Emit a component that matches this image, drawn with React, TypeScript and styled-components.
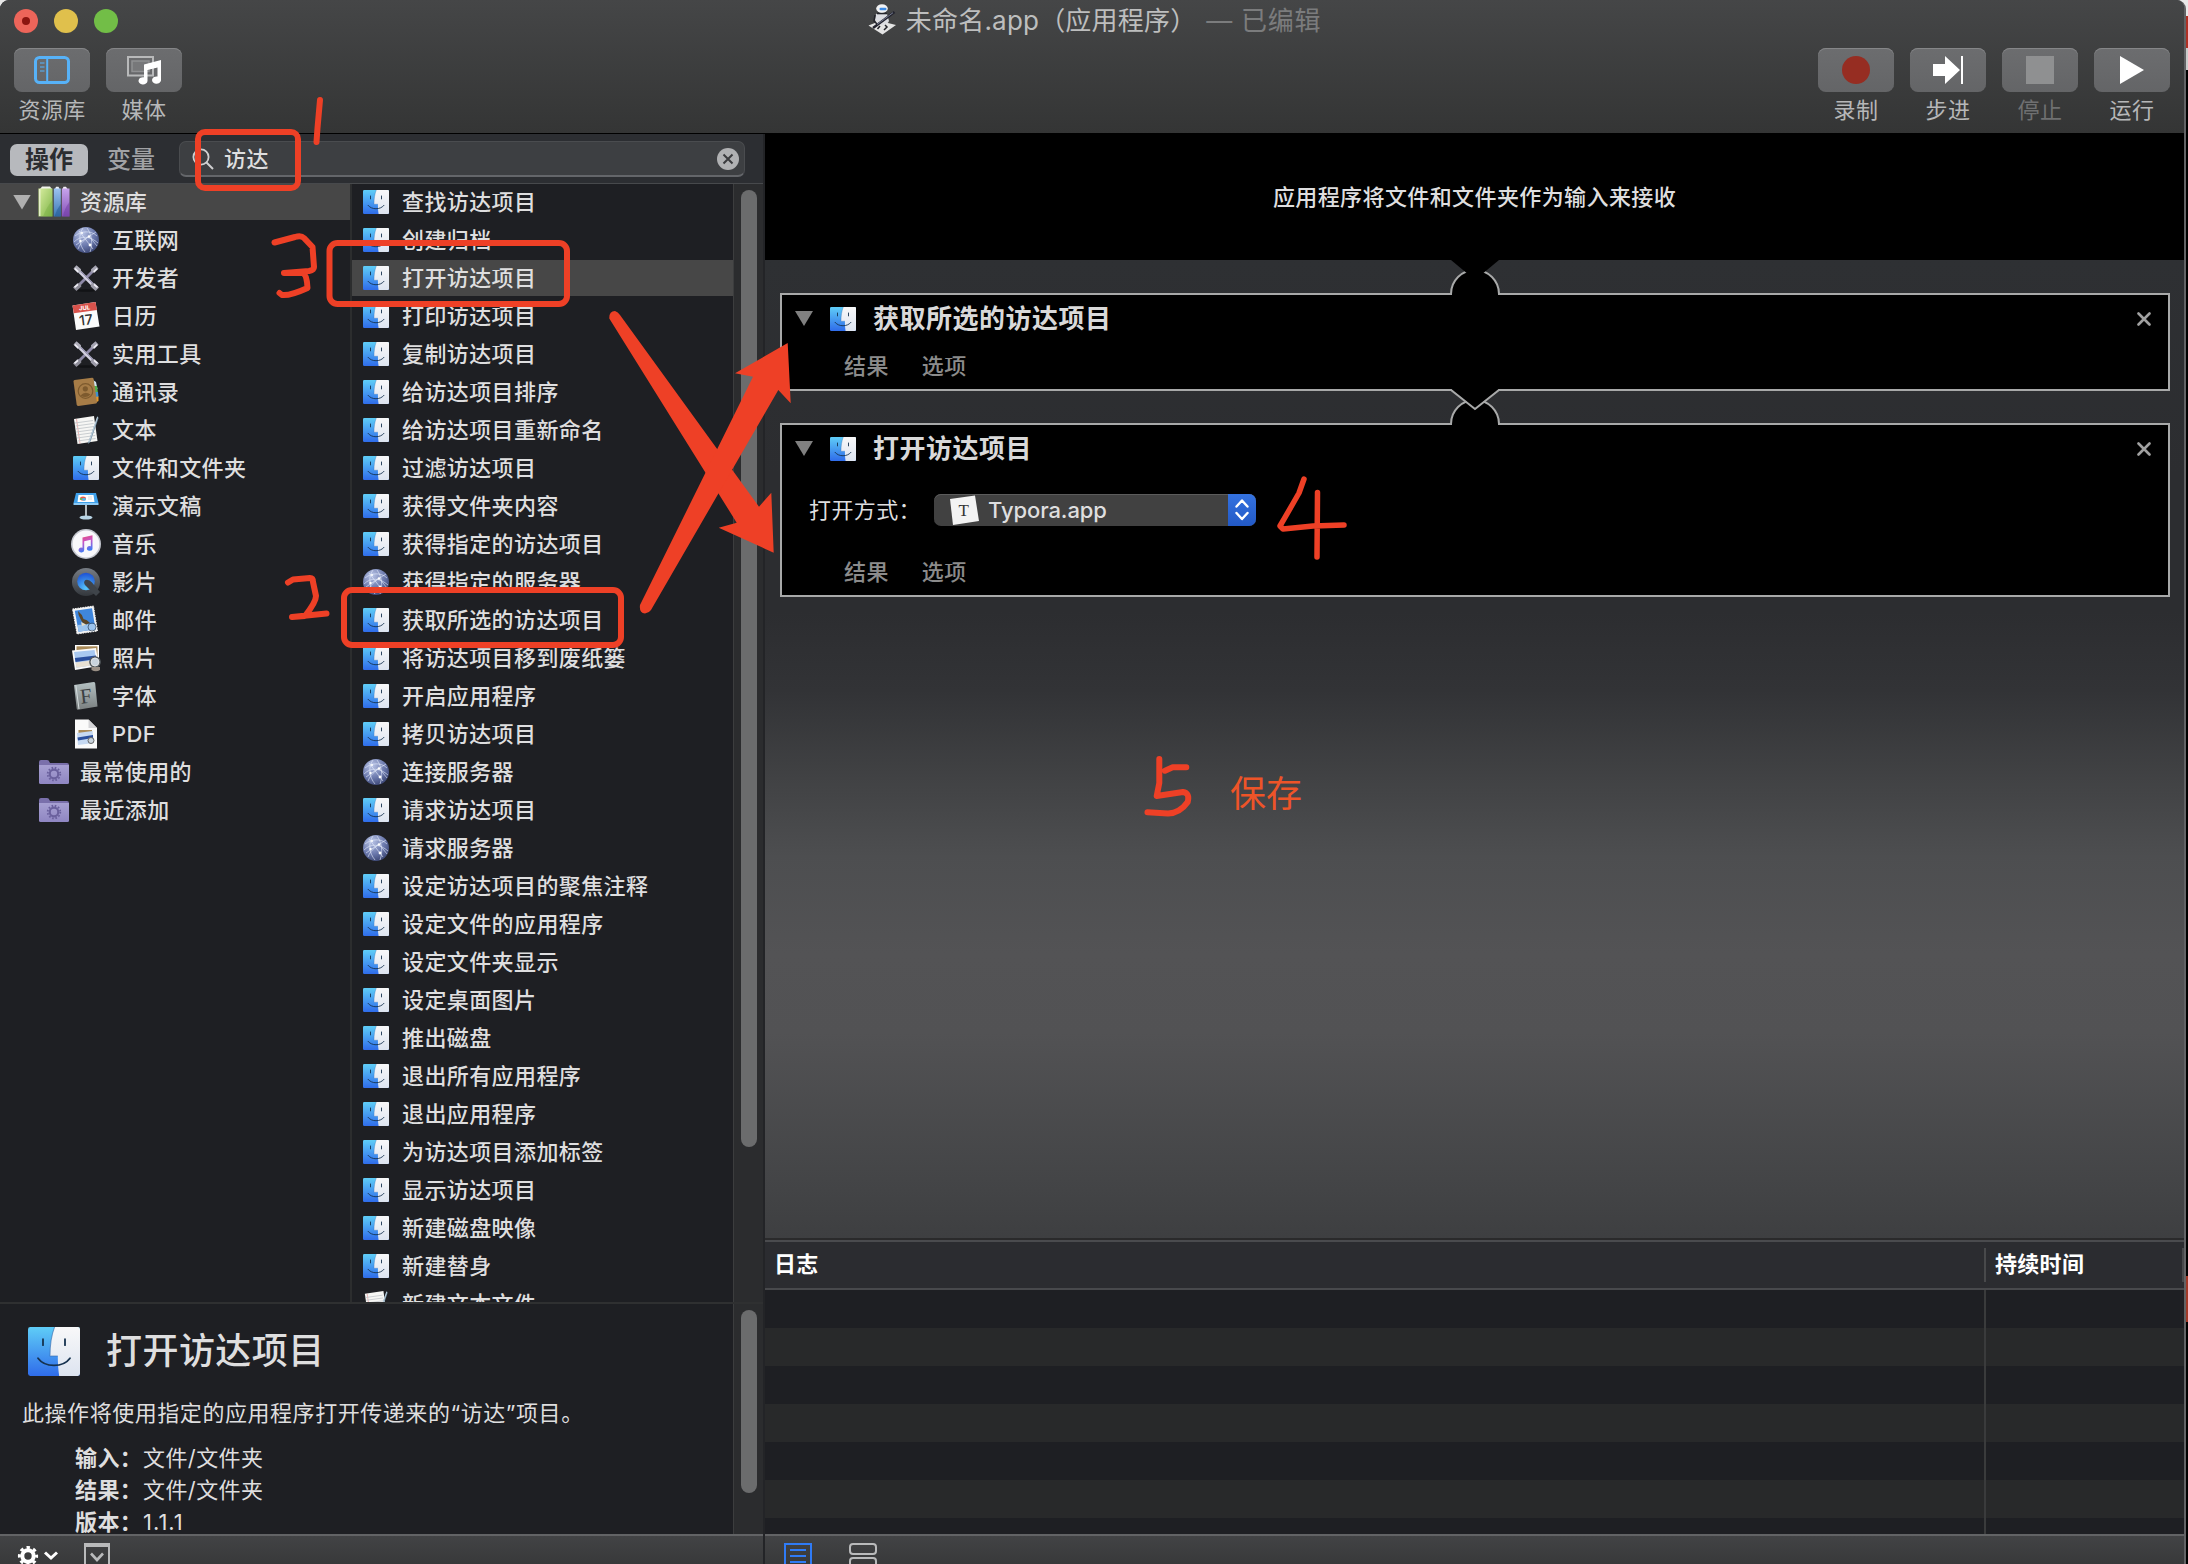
import React from 'react';
import styled, { createGlobalStyle } from 'styled-components';

const RED = '#ee4026';

const GlobalStyle = createGlobalStyle`
  * { box-sizing: border-box; }
  body {
    margin: 0;
    background: #000;
    overflow: hidden;
    font-family: Inter, "Noto Sans CJK SC", sans-serif;
    font-size: 22px;
    letter-spacing: 0.4px;
    color: #dededf;
  }
`;

/* ---------- shell ---------- */

const Desktop = styled.div`
  position: relative;
  display: flex;
  width: 2188px;
  height: 1564px;
  overflow: hidden;
  background: linear-gradient(#e8e8e8 0 16px, #b03024 16px 48px, #ccc 48px 70px, #000 70px 1276px, #a23a28 1276px 1322px, #000 1322px);
`;

const Window = styled.div`
  display: flex;
  flex-direction: column;
  width: 2186px;
  height: 1564px;
  border-right: 2px solid #626365;
  border-radius: 9px 9px 0 0;
  overflow: hidden;
  background: #2b2c30;
`;

const Chrome = styled.header`
  display: flex;
  flex-direction: column;
  height: 134px;
  flex: none;
  background: linear-gradient(#454647, #343535);
  border-bottom: 1px solid #000;
`;

const TitleBar = styled.div`
  display: grid;
  grid-template-columns: 1fr auto 1fr;
  align-items: center;
  height: 41px;
  padding-left: 14px;
`;

const Lights = styled.div`
  display: flex;
  gap: 16px;
`;

const Light = styled.span<{ $color: string; $dot?: boolean }>`
  display: grid;
  place-items: center;
  width: 24px;
  height: 24px;
  border-radius: 50%;
  background: ${(p) => p.$color};
  &::after {
    content: '';
    width: 8px;
    height: 8px;
    border-radius: 50%;
    background: ${(p) => (p.$dot ? '#8c1510' : 'transparent')};
  }
`;

const Title = styled.div`
  display: flex;
  align-items: center;
  height: 41px;
  line-height: 41px;
  margin-left: -9px;
  font-size: 26px;
  letter-spacing: 0.2px;
  color: #bdbebe;
  white-space: pre;
  svg { margin-right: 9px; margin-top: -2px; }
`;

const Edited = styled.span`
  margin-left: 10px;
  letter-spacing: 0.7px;
  color: #7b7c7d;
`;

const Toolbar = styled.div`
  display: flex;
  gap: 16px;
  padding: 7px 14px 0;
`;

const ToolItem = styled.div<{ $dim?: boolean; $push?: boolean }>`
  display: flex;
  flex-direction: column;
  align-items: center;
  width: 76px;
  margin-left: ${(p) => (p.$push ? 'auto' : '0')};
  color: ${(p) => (p.$dim ? '#6f7071' : '#b6b7b8')};
`;

const ToolButton = styled.div`
  display: grid;
  place-items: center;
  width: 76px;
  height: 44px;
  border-radius: 8px;
  background: linear-gradient(#6c6d6f, #646567);
  box-shadow: inset 0 1px 0 #858688;
`;

const ToolLabel = styled.span`
  height: 36px;
  line-height: 36px;
`;

const Body = styled.div`
  display: flex;
  flex: 1;
  min-height: 0;
`;

/* ---------- left side ---------- */

const Side = styled.aside`
  display: flex;
  flex-direction: column;
  width: 765px;
  flex: none;
  border-right: 2px solid #232427;
`;

const FilterBar = styled.div`
  display: flex;
  align-items: center;
  height: 50px;
  flex: none;
  padding: 0 18px 0 10px;
  background: #2c2e32;
  border-bottom: 1px solid #47494c;
`;

const Tab = styled.span<{ $active?: boolean }>`
  display: grid;
  place-items: center;
  width: 78px;
  height: 32px;
  margin-top: 2px;
  margin-right: 4px;
  border-radius: 7px;
  font-size: 24px;
  font-weight: ${(p) => (p.$active ? 700 : 500)};
  letter-spacing: 0;
  line-height: 32px;
  background: ${(p) => (p.$active ? '#b7b9bd' : 'transparent')};
  color: ${(p) => (p.$active ? '#2b2d31' : '#a1a2a5')};
`;

const Search = styled.div`
  display: flex;
  align-items: center;
  flex: 1;
  height: 36px;
  margin: 1px 0 0 5px;
  padding: 1px 5px 0 12px;
  border: 1px solid #4a4c4f;
  border-bottom: 2px solid #64666a;
  border-radius: 7px;
  background: #3d3f42;
`;

const SearchText = styled.span`
  flex: 1;
  margin-left: 10px;
  font-weight: 500;
  line-height: 32px;
`;

const Browser = styled.div`
  display: flex;
  height: 1118px;
  flex: none;
  background: #1e1f23;
  overflow: hidden;
`;

const LibraryList = styled.div`
  display: flex;
  flex-direction: column;
  gap: 2px;
  width: 352px;
  border-right: 2px solid #2c2d2e;
`;

const ActionList = styled.div`
  display: flex;
  flex-direction: column;
  gap: 2px;
  width: 381px;
`;

const Row = styled.div<{ $selected?: boolean; $indent: number; $icon: number; $gap: number }>`
  display: flex;
  align-items: center;
  height: 36px;
  flex: none;
  padding-left: ${(p) => p.$indent}px;
  background: ${(p) => (p.$selected ? '#474747' : 'transparent')};
  font-weight: 500;
  line-height: 36px;
  white-space: nowrap;
  > svg { width: ${(p) => p.$icon}px; flex: none; margin-right: ${(p) => p.$gap}px; }
`;

const Twisty = styled.i<{ $muted?: boolean; $after?: number }>`
  width: 18px;
  height: 15px;
  flex: none;
  margin-right: ${(p) => p.$after ?? 0}px;
  background: ${(p) => (p.$muted ? '#808080' : '#b0b0b0')};
  clip-path: polygon(0 0, 100% 0, 50% 100%);
`;

const Track = styled.div<{ $top: number; $thumb: number }>`
  width: 30px;
  flex: none;
  padding: ${(p) => p.$top}px 0 0 7px;
  border-left: 1px solid #3c3d3e;
  background: #2b2c2e;
  &::before {
    content: '';
    display: block;
    width: 16px;
    height: ${(p) => p.$thumb}px;
    border-radius: 8px;
    background: #6b6c6d;
  }
`;

const Info = styled.section`
  display: flex;
  height: 232px;
  flex: none;
  border-top: 2px solid #2f3031;
  background: #1e1f23;
  overflow: hidden;
`;

const InfoText = styled.div`
  flex: 1;
  padding: 22px 0 0 22px;
  height: 230px;
  overflow: hidden;
`;

const InfoHead = styled.div`
  display: flex;
  align-items: center;
  gap: 26px;
  height: 50px;
  padding-left: 6px;
  font-size: 36px;
  font-weight: 500;
  line-height: 50px;
  letter-spacing: 0.45px;
`;

const InfoDesc = styled.p`
  margin: 21px 0 13px;
  height: 32px;
  line-height: 32px;
  letter-spacing: 0.55px;
`;

const InfoLine = styled.div<{ $spacing?: number }>`
  display: flex;
  height: 32px;
  padding-left: 53px;
  line-height: 32px;
  letter-spacing: ${(p) => p.$spacing ?? 0.4}px;
  b { width: 68px; font-weight: 700; letter-spacing: 0.4px; }
`;

const Footer = styled.div<{ $left: number; $gap: number }>`
  display: flex;
  align-items: flex-start;
  gap: ${(p) => p.$gap}px;
  height: 30px;
  flex: none;
  padding: 7px 0 0 ${(p) => p.$left}px;
  border-top: 2px solid #626365;
  background: linear-gradient(#424345, #38393a);
  overflow: hidden;
`;

/* ---------- workflow ---------- */

const Main = styled.main`
  display: flex;
  flex-direction: column;
  flex: 1;
  min-width: 0;
`;

const InputHeader = styled.div`
  height: 126px;
  flex: none;
  background: #000;
  font-weight: 500;
  line-height: 126px;
  text-align: center;
`;

const Canvas = styled.div`
  position: relative;
  display: flex;
  flex-direction: column;
  gap: 32px;
  height: 978px;
  flex: none;
  padding: 33px 14px 0 15px;
  background: linear-gradient(#2e3033 0, #2c2d30 22%, #2c2d30 36%, #323336 44%, #414244 53%, #4d4e50 61%, #535355 71%, #525254 79%, #444547 94%, #3e3f41 100%);
`;

const HeaderNotch = styled.svg`
  position: absolute;
  top: 0;
  left: 686px;
  z-index: 1;
`;

const Card = styled.section<{ $height: number }>`
  position: relative;
  display: flex;
  flex-direction: column;
  justify-content: space-between;
  height: ${(p) => p.$height}px;
  flex: none;
  border: 2px solid #a8a9a9;
  background: #000;
`;

const Bump = styled.svg`
  position: absolute;
  left: 668px;
  top: -26px;
`;

const Vee = styled.svg`
  position: absolute;
  left: 668px;
  bottom: -22px;
  z-index: 2;
`;

const CardHead = styled.div`
  display: flex;
  align-items: center;
  height: 47px;
  padding: 0 17px 0 13px;
  font-size: 26px;
  font-weight: 700;
  line-height: 47px;
  letter-spacing: 0.5px;
  color: #d9d9d9;
  > svg { width: 26px; margin: 0 17px; }
  > svg:last-child { width: 14px; margin: 0 0 0 auto; }
`;

const CardField = styled.div`
  display: flex;
  align-items: center;
  height: 40px;
  padding-left: 27px;
  margin-top: -2px;
  font-weight: 400;
  line-height: 40px;
`;

const Select = styled.div`
  display: flex;
  align-items: center;
  width: 322px;
  height: 32px;
  margin-left: 13px;
  padding-left: 14px;
  border-radius: 7px;
  background: #414141;
  box-shadow: inset 0 1px 0 #5c5c5c;
  overflow: hidden;
  font-weight: 500;
  line-height: 32px;
  letter-spacing: -0.1px;
  > svg { margin-right: 8px; }
`;

const Stepper = styled.span`
  display: grid;
  place-items: center;
  width: 28px;
  height: 32px;
  margin-left: auto;
  background: linear-gradient(#3472e0, #2259c6);
`;

const CardTabs = styled.div`
  display: flex;
  gap: 33px;
  height: 46px;
  padding-left: 62px;
  line-height: 46px;
  font-weight: 500;
  color: #8b8b8b;
`;

/* ---------- log ---------- */

const LogHead = styled.div`
  display: flex;
  align-items: center;
  height: 52px;
  flex: none;
  border-top: 2px solid #2a2a2b;
  border-bottom: 2px solid #48494c;
  box-shadow: inset 0 2px 0 #4a4b4e;
  background: #2b2c30;
  font-weight: 700;
  letter-spacing: 0.3px;
  color: #fff;
`;

const LogCell = styled.span<{ $width: number }>`
  width: ${(p) => p.$width}px;
  flex: none;
  height: 34px;
  margin-top: 2px;
  padding-left: 9px;
  line-height: 33px;
  border-right: 2px solid #48494b;
`;

const LogBody = styled.div`
  display: flex;
  flex-direction: column;
  height: 244px;
  flex: none;
  overflow: hidden;
`;

const LogRow = styled.div`
  display: flex;
  height: 38px;
  flex: none;
  background: #1e1f23;
  &:nth-child(even) { background: #28292a; }
  &::before {
    content: '';
    width: 1219px;
    border-right: 2px solid #3a3b3c;
  }
`;

/* ---------- annotations ---------- */

const Marks = styled.svg`
  position: absolute;
  inset: 0;
  z-index: 5;
`;

const SaveNote = styled.span`
  position: absolute;
  left: 1230px;
  top: 769px;
  z-index: 5;
  font-size: 36px;
  line-height: 50px;
  letter-spacing: 0;
  color: #ee5428;
`;

/* ---------- icons ---------- */

const HiddenDefs = styled.svg`
  position: absolute;
  width: 0;
  height: 0;
`;

const Defs = () => (
  <HiddenDefs>
    <defs>
      <linearGradient id="fBlue" x1="0" y1="0" x2="0" y2="1"><stop offset="0" stopColor="#5fcdf7" /><stop offset="1" stopColor="#2f6cea" /></linearGradient>
      <linearGradient id="fWhite" x1="0" y1="0" x2="0" y2="1"><stop offset="0" stopColor="#f8f8f9" /><stop offset="1" stopColor="#dde4f0" /></linearGradient>
      <radialGradient id="globe" cx="0.35" cy="0.25" r="0.8"><stop offset="0" stopColor="#b9c4e6" /><stop offset="0.6" stopColor="#6b79ad" /><stop offset="1" stopColor="#3b4674" /></radialGradient>
      <linearGradient id="green" x1="0" y1="0" x2="1" y2="1"><stop offset="0" stopColor="#d8eda0" /><stop offset="1" stopColor="#7fb548" /></linearGradient>
      <linearGradient id="blueB" x1="0" y1="0" x2="0" y2="1"><stop offset="0" stopColor="#9cc3f0" /><stop offset="1" stopColor="#3c78b4" /></linearGradient>
      <linearGradient id="purp" x1="0" y1="0" x2="0" y2="1"><stop offset="0" stopColor="#c7a4ec" /><stop offset="1" stopColor="#8652b8" /></linearGradient>
      <linearGradient id="note" x1="0" y1="0" x2="0.3" y2="1"><stop offset="0" stopColor="#f0476a" /><stop offset="0.5" stopColor="#c455c9" /><stop offset="1" stopColor="#3f7df5" /></linearGradient>
      <linearGradient id="qt" x1="0" y1="0" x2="0" y2="1"><stop offset="0" stopColor="#777d85" /><stop offset="1" stopColor="#33373c" /></linearGradient>
      <radialGradient id="qtb" cx="0.5" cy="0.9" r="0.9"><stop offset="0" stopColor="#59c8fa" /><stop offset="1" stopColor="#1b4fd4" /></radialGradient>
      <linearGradient id="fontB" x1="0" y1="0" x2="0" y2="1"><stop offset="0" stopColor="#b4c0c2" /><stop offset="1" stopColor="#7a7f80" /></linearGradient>
      <linearGradient id="fold" x1="0" y1="0" x2="0" y2="1"><stop offset="0" stopColor="#a7a0d2" /><stop offset="1" stopColor="#8f86c2" /></linearGradient>
    </defs>
  </HiddenDefs>
);

const Finder = ({ w = 26, h = 24 }: { w?: number; h?: number }) => (
  <svg width={w} height={h} viewBox="0 0 26 24" preserveAspectRatio="none">
    <rect width="26" height="24" rx="1.2" fill="url(#fBlue)" />
    <path d="M13.3 0H24.8A1.2 1.2 0 0 1 26 1.2V22.8A1.2 1.2 0 0 1 24.8 24H15.6C15.2 21.500 14.900 18 14.900 14.200H11C11 9 11.700 4 13.300 0Z" fill="url(#fWhite)" />
    <path d="M14.9 14.2H11C11 9 11.7 4 13.3 0" fill="none" stroke="#3568a8" strokeWidth="0.5" opacity="0.6" />
    <path d="M7.500 6V8.900M18.500 6V8.900" stroke="#16324f" strokeWidth="0.9" strokeLinecap="round" />
    <path d="M5 15.300C8.500 20 17.500 20 21 15.300" fill="none" stroke="#16324f" strokeWidth="0.9" strokeLinecap="round" />
  </svg>
);

const Globe = () => (
  <svg width="26" height="26" viewBox="0 0 26 26">
    <circle cx="13" cy="13" r="13" fill="url(#globe)" />
    <g fill="none" stroke="#e6ecfb" strokeWidth="0.8" opacity="0.75">
      <path d="M2 9C8 4 18 3 24 9M1 15C8 8 17 9 25 16M5 22C8 14 15 10 23 5M10 1C5 8 6 18 12 25M14 1C19 8 20 17 17 25M6 4L20 22M3 18L16 9L24 19" />
    </g>
    <g fill="#fff"><circle cx="16" cy="9.500" r="1.300" /><circle cx="7.500" cy="14" r="1.200" /><circle cx="17" cy="18" r="1.400" /><circle cx="9" cy="6" r="1" /></g>
  </svg>
);

const Tools = () => (
  <svg width="28" height="28" viewBox="0 0 28 28">
    <ellipse cx="14" cy="26.500" rx="10" ry="1.300" fill="#121316" />
    <path d="M23 5L5 23" stroke="#8e89a8" strokeWidth="2.800" />
    <path d="M5 5L23 23" stroke="#d2d0e0" strokeWidth="3.200" />
    <path d="M5.700 4.300L23.700 22.300" stroke="#6c6690" strokeWidth="0.900" />
    <path d="M1.500 4.500L4.500 1.200L9 5.200L8.600 8.400L5.600 8.700Z" fill="#aeadb9" />
    <path d="M26.500 4.500L23.500 1.200L19 5.200L19.400 8.400L22.400 8.700Z" fill="#a5a4b2" />
    <path d="M1 23.500L4.500 27L9.300 22.500L8.900 19.400L5.500 19Z" fill="#8d8c98" />
    <path d="M27 23.500L23.500 27L18.700 22.500L19.100 19.400L22.500 19Z" fill="#9c9ba8" />
    <path d="M2.800 4.600L6.300 7.800M25.200 4.600L21.700 7.800M2.500 23.300L6 20.300M25.500 23.300L22 20.300" stroke="#f0eff6" strokeWidth="1.700" />
  </svg>
);

const Calendar = () => (
  <svg width="28" height="30" viewBox="0 0 28 30">
    <path d="M0.500 4.500L23.500 1L27.500 25.500L4 29Z" fill="#fbfbfb" />
    <path d="M0.500 4.500L23.500 1L25 9L1.800 12.200Z" fill="#d9534c" />
    <text x="7" y="9" fontSize="6" fontWeight="700" fill="#fff" letterSpacing="0" transform="rotate(-7 12 7)">JUL</text>
    <text x="7" y="24" fontSize="14" fill="#333" letterSpacing="0" transform="rotate(-7 14 19)">17</text>
  </svg>
);

const Contacts = () => (
  <svg width="28" height="30" viewBox="0 0 28 30">
    <path d="M21 3L24 5L25.500 12H22Z" fill="#cfe3ee" /><path d="M22 9H25L26 16H23Z" fill="#52b04c" /><path d="M23 15H26L26.500 20H23Z" fill="#3d8fd0" /><path d="M23 20L26.500 19.500V24L23 26Z" fill="#e39a2d" />
    <path d="M1.500 4.500Q1.400 3.300 2.600 3L20 0.800Q21.300 0.700 21.600 2L25 25Q25 26.200 24 26.400L6.500 29Q5 29 4.700 27.800Z" fill="#a67c47" />
    <circle cx="13.500" cy="14" r="7.300" fill="none" stroke="#7d5a2e" strokeWidth="1.200" />
    <circle cx="13.300" cy="11.800" r="2.600" fill="#7d5a2e" /><path d="M8.500 18.500Q13 13.500 18.500 17.500Q14 22 8.500 18.500Z" fill="#7d5a2e" />
  </svg>
);

const TextDoc = () => (
  <svg width="28" height="30" viewBox="0 0 28 30">
    <path d="M2 4L22 1L25.500 26L5.500 29Z" fill="#f6f6f4" />
    <path d="M4.500 4L8 28.500" stroke="#e8a0a0" strokeWidth="0.800" />
    <path d="M3 8L21 5.500M3.400 11L21.500 8.500M3.800 14L22 11.500M4.200 17L22.400 14.500M4.600 20L22.800 17.500M5 23L23.200 20.500M5.400 26L23.600 23.500" stroke="#c4c8cc" strokeWidth="0.900" />
    <path d="M25.500 1L16.500 26.500L15.800 29L18.300 27L26.500 3Z" fill="#7d99ae" />
    <path d="M25.500 2L17 27" stroke="#c7d7e2" strokeWidth="0.900" />
  </svg>
);

const Keynote = () => (
  <svg width="28" height="28" viewBox="0 0 28 28">
    <path d="M14 11V25" stroke="#c4ccd2" strokeWidth="1.800" />
    <ellipse cx="14" cy="25.500" rx="6.500" ry="2" fill="#b8d4e6" />
    <path d="M4 1H24L26.500 11H1.500Z" fill="#3fa0ea" /><path d="M1.500 11H26.500V13H1.500Z" fill="#8ccaf5" />
    <path d="M6.500 3H21.500L22.500 10H5.500Z" fill="#fff" />
    <ellipse cx="11" cy="6.400" rx="3" ry="2" fill="#e95a4e" /><ellipse cx="12" cy="7.400" rx="2" ry="1.300" fill="#52b8e8" /><ellipse cx="9" cy="7" rx="1.300" ry="1" fill="#6bbf5b" />
    <path d="M16 5H20M16 7H20" stroke="#ccc" strokeWidth="0.700" />
  </svg>
);

const Music = () => (
  <svg width="30" height="30" viewBox="0 0 30 30">
    <circle cx="15" cy="15" r="15" fill="#c3c6ce" /><circle cx="15" cy="15" r="13.400" fill="#f8f8fb" />
    <path d="M11.500 8.500L21.500 6.300V19.300A2.800 2.400 0 1 1 19.800 17.200V10.800L13.200 12.200V21A2.800 2.400 0 1 1 11.500 18.800Z" fill="url(#note)" />
  </svg>
);

const QuickTime = () => (
  <svg width="30" height="30" viewBox="0 0 30 30">
    <circle cx="15" cy="15" r="14" fill="url(#qt)" />
    <circle cx="15" cy="14.500" r="8.800" fill="url(#qtb)" />
    <path d="M14.500 13Q18 12 21 15.500L29 25L25 29L14 18Q12 15 14.500 13Z" fill="#3f444a" />
  </svg>
);

const Mail = () => (
  <svg width="28" height="30" viewBox="0 0 28 30">
    <path d="M0.500 4L21.500 1L25.500 26L5 29Z" fill="#f3f3f3" stroke="#f3f3f3" strokeWidth="1" strokeDasharray="1.500 1" />
    <path d="M2.800 5.800L20 3.300L23.500 24.300L6.600 26.800Z" fill="#3f86dc" /><path d="M5.500 20L22.700 18.500L23.500 24.300L6.600 26.800Z" fill="#9cc4ee" />
    <path d="M6 6Q10 9 11.500 14Q15 14.500 18 18L14 19.500Q10 18 8.500 14Q6 10 6 6Z" fill="#5a4528" />
    <path d="M9 17L14 19.500L10 21Z" fill="#e9dcc0" />
    <circle cx="20" cy="22" r="4" fill="none" stroke="#35506e" strokeWidth="0.800" />
  </svg>
);

const Photos = () => (
  <svg width="30" height="28" viewBox="0 0 30 28">
    <path d="M4 1H28V20H4Z" fill="#fff" /><path d="M5.500 2.300H26.500V18H5.500Z" fill="#a98a58" />
    <path d="M1 6.500L25 4L28 22L4 26Z" fill="#fafafa" /><path d="M3 8L23.500 6L26 20.500L5.500 23.800Z" fill="#a9c9f1" />
    <path d="M3.800 14L25 11.500L25.600 15L4.500 18Z" fill="#2a4f9e" /><path d="M4.600 18.500L25.600 15.800L26 20.500L5.500 23.800Z" fill="#e9e1d3" />
    <circle cx="24" cy="18" r="5" fill="#c9d3dc" stroke="#555b5f" strokeWidth="1.700" /><circle cx="24" cy="18" r="4" fill="none" stroke="#e6e6e6" strokeWidth="0.800" />
    <path d="M20.500 23H29V26Q25 28.500 20.500 26Z" fill="#9a8f85" />
  </svg>
);

const FontBook = () => (
  <svg width="28" height="30" viewBox="0 0 28 30">
    <path d="M2 4L21.500 1Q23 1 23.200 2.300L25.500 25.500L6 28.800Q5 29 4.700 27.800Z" fill="url(#fontB)" />
    <path d="M3.800 4L7 28" stroke="#d5dcde" strokeWidth="1" />
    <text x="8" y="22" fontFamily="Liberation Serif" fontSize="21" fill="#3b4042" letterSpacing="0" transform="rotate(-7 14 15)">F</text>
  </svg>
);

const PdfDoc = () => (
  <svg width="24" height="30" viewBox="0 0 24 30">
    <path d="M1 0.500H14.500L23 9V29.500H1Z" fill="#fafafa" /><path d="M14.500 0.500V9H23Z" fill="#d5d5d8" />
    <path d="M4.500 11L18 11V23H4.500Z" fill="#a98a58" /><path d="M3 14L18.500 12L20 24L4 26Z" fill="#c6d9f2" /><path d="M3.500 18.500L19 16V19L4 21.500Z" fill="#2a4f9e" />
    <circle cx="17" cy="21.500" r="3" fill="#c9d3dc" stroke="#666" strokeWidth="1" />
  </svg>
);

const Library = () => (
  <svg width="32" height="32" viewBox="0 0 32 32">
    <path d="M2 3L4 0.500H12L14 3Z" fill="#f1f3ec" /><path d="M17 3L18 0.800H20.500L21.500 3Z" fill="#eef2f8" /><path d="M24.500 3L25.500 0.800H28L29.500 3Z" fill="#f3eef8" />
    <path d="M0.500 2.500H14.500V30.500H0.500Z" fill="url(#green)" /><path d="M1.800 3V30" stroke="#f0f6dc" strokeWidth="1.200" />
    <path d="M15.800 2.500H22.800V30.500H15.800Z" fill="url(#blueB)" /><path d="M23.800 2.500H31.500V30.500H23.800Z" fill="url(#purp)" />
    <path d="M14.500 14Q8 22 5 30.500H14.500Z" fill="#6fa53c" opacity="0.350" /><path d="M22.800 18Q18 24 16.500 30.500H22.800Z" fill="#1f5690" opacity="0.500" /><path d="M31.500 16Q26 23 25 30.500H31.500Z" fill="#6a35a0" opacity="0.450" />
  </svg>
);

const SmartFolder = () => (
  <svg width="30" height="24" viewBox="0 0 30 24">
    <path d="M0 2Q0 0 2 0H8Q10 0 10.500 2L11 3H28Q30 3 30 5V8H0Z" fill="#7a70ab" />
    <path d="M0 5H30V22.500Q30 24 28.500 24H1.500Q0 24 0 22.500Z" fill="url(#fold)" />
    <circle cx="15" cy="14" r="6.300" fill="none" stroke="#6a609d" strokeWidth="1.800" strokeDasharray="1.650 1.650" />
    <circle cx="15" cy="14" r="4.300" fill="none" stroke="#6a609d" strokeWidth="2.200" />
  </svg>
);

const Robot = () => (
  <svg width="29" height="31" viewBox="0 0 29 31">
    <path d="M0.500 21.500L12 17L28 21L14.500 30.500Z" fill="#e4e4e4" />
    <path d="M8 10Q13 7 19 10L21 17Q20 20 14 21Q8 20 7 16Z" fill="#dcdde2" />
    <path d="M7 11L6 17L9 20M12 22L9.500 25M17 21L19 23L16 26" stroke="#23242b" strokeWidth="1.500" fill="none" />
    <path d="M9 9.500H19" stroke="#24252b" strokeWidth="1.600" />
    <ellipse cx="14" cy="4.500" rx="5.800" ry="4.300" fill="#f1f2f4" />
    <rect x="11.500" y="3.800" width="7" height="2.500" rx="1.200" fill="#3b8be6" />
    <path d="M5 24L26.500 8" stroke="#23242f" strokeWidth="2.600" /><path d="M9 20.500L25 8.700" stroke="#8a90a8" strokeWidth="0.800" />
  </svg>
);

const SidebarIcon = () => (
  <svg width="36" height="28" viewBox="0 0 36 28">
    <rect x="1.500" y="1.500" width="33" height="25" rx="4" fill="none" stroke="#57b2f8" strokeWidth="3" />
    <path d="M13.200 2V26" stroke="#57b2f8" strokeWidth="2" />
    <path d="M6 7H10.500M6 11H10.500M6 15H10.500" stroke="#57b2f8" strokeWidth="1.600" opacity="0.700" />
  </svg>
);

const MediaIcon = () => (
  <svg width="36" height="30" viewBox="0 0 36 30">
    <rect x="2" y="2" width="25" height="18.500" fill="none" stroke="#b8b9ba" strokeWidth="2" />
    <rect x="6" y="6" width="17" height="10.500" fill="#77787a" stroke="#909193" strokeWidth="1.500" />
    <path d="M18 9.500L35 5V25.500A4.500 3.600 0 1 1 31.500 21.600V12.500L21.500 15V26A4.500 3.600 0 1 1 18 22.300Z" fill="#fff" />
  </svg>
);

const LIBRARY: { name: string; Icon: () => React.ReactElement; small?: boolean }[] = [
  { name: '互联网', Icon: Globe, small: true },
  { name: '开发者', Icon: Tools },
  { name: '日历', Icon: Calendar },
  { name: '实用工具', Icon: Tools },
  { name: '通讯录', Icon: Contacts },
  { name: '文本', Icon: TextDoc },
  { name: '文件和文件夹', Icon: () => <Finder />, small: true },
  { name: '演示文稿', Icon: Keynote },
  { name: '音乐', Icon: Music },
  { name: '影片', Icon: QuickTime },
  { name: '邮件', Icon: Mail },
  { name: '照片', Icon: Photos },
  { name: '字体', Icon: FontBook },
  { name: 'PDF', Icon: PdfDoc },
];

const ACTIONS = [
  '查找访达项目', '创建归档', '打开访达项目', '打印访达项目', '复制访达项目', '给访达项目排序', '给访达项目重新命名',
  '过滤访达项目', '获得文件夹内容', '获得指定的访达项目', '获得指定的服务器', '获取所选的访达项目', '将访达项目移到废纸篓',
  '开启应用程序', '拷贝访达项目', '连接服务器', '请求访达项目', '请求服务器', '设定访达项目的聚焦注释', '设定文件的应用程序',
  '设定文件夹显示', '设定桌面图片', '推出磁盘', '退出所有应用程序', '退出应用程序', '为访达项目添加标签', '显示访达项目',
  '新建磁盘映像', '新建替身', '新建文本文件',
];

const actionIcon = (name: string) => {
  if (name.endsWith('服务器')) return <Globe />;
  if (name === '新建文本文件') return <TextDoc />;
  return <Finder />;
};

const CloseX = () => (
  <svg width="14" height="14" viewBox="0 0 14 14"><path d="M1.500 1.500L12.500 12.500M12.500 1.500L1.500 12.500" stroke="#a0a0a0" strokeWidth="2.600" strokeLinecap="round" /></svg>
);

const Connector = () => (
  <Bump width="50" height="28" viewBox="0 0 50 28">
    <path d="M1 28V25A24 24 0 0 1 49 25V28Z" fill="#000" />
    <path d="M0 25H1A24 24 0 0 1 49 25H50" fill="none" stroke="#a8a9a9" strokeWidth="2" />
  </Bump>
);

const ActionCard = ({ title, height, last, children }: { title: string; height: number; last?: boolean; children?: React.ReactNode }) => (
  <Card $height={height}>
    <Connector />
    <CardHead><Twisty $muted /><Finder />{title}<CloseX /></CardHead>
    {children}
    <CardTabs><span>结果</span><span>选项</span></CardTabs>
    {!last && (
      <Vee width="50" height="24" viewBox="0 0 50 24">
        <path d="M1 0V2L25 21.500L49 2V0Z" fill="#000" />
        <path d="M0 3H1L25 22L49 3H50" fill="none" stroke="#a8a9a9" strokeWidth="2" />
      </Vee>
    )}
  </Card>
);

const App = () => (
  <>
    <GlobalStyle />
    <Defs />
    <Desktop>
      <Window>
        <Chrome>
          <TitleBar>
            <Lights><Light $color="#ed655a" $dot /><Light $color="#e0c04c" /><Light $color="#72be47" /></Lights>
            <Title><Robot />未命名.app（应用程序）<Edited>— 已编辑</Edited></Title>
          </TitleBar>
          <Toolbar>
            <ToolItem><ToolButton><SidebarIcon /></ToolButton><ToolLabel>资源库</ToolLabel></ToolItem>
            <ToolItem><ToolButton><MediaIcon /></ToolButton><ToolLabel>媒体</ToolLabel></ToolItem>
            <ToolItem $push>
              <ToolButton><svg width="28" height="28"><circle cx="14" cy="14" r="14" fill="#962d22" /></svg></ToolButton><ToolLabel>录制</ToolLabel>
            </ToolItem>
            <ToolItem>
              <ToolButton><svg width="32" height="28" viewBox="0 0 32 28"><path d="M1 8H13V0L28 14L13 28V20H1Z" fill="#fff" /><path d="M30 0V28" stroke="#fff" strokeWidth="2" /></svg></ToolButton><ToolLabel>步进</ToolLabel>
            </ToolItem>
            <ToolItem $dim>
              <ToolButton><svg width="28" height="28"><rect width="28" height="28" fill="#8f9091" /></svg></ToolButton><ToolLabel>停止</ToolLabel>
            </ToolItem>
            <ToolItem>
              <ToolButton><svg width="24" height="28"><path d="M0 0L24 14L0 28Z" fill="#fff" /></svg></ToolButton><ToolLabel>运行</ToolLabel>
            </ToolItem>
          </Toolbar>
        </Chrome>

        <Body>
          <Side>
            <FilterBar>
              <Tab $active>操作</Tab>
              <Tab>变量</Tab>
              <Search>
                <svg width="22" height="22" viewBox="0 0 22 22"><circle cx="9" cy="9" r="7.600" fill="none" stroke="#d0d0d1" strokeWidth="1.800" /><path d="M14.500 14.500L21 21" stroke="#d0d0d1" strokeWidth="2" /></svg>
                <SearchText>访达</SearchText>
                <svg width="22" height="22" viewBox="0 0 22 22"><circle cx="11" cy="11" r="11" fill="#b0b1b3" /><path d="M6.500 6.500L15.500 15.500M15.500 6.500L6.500 15.500" stroke="#3a3b3e" strokeWidth="2" /></svg>
              </Search>
            </FilterBar>
            <Browser>
              <LibraryList>
                <Row $selected $indent={13} $icon={32} $gap={10}><Twisty $after={7} /><Library />资源库</Row>
                {LIBRARY.map(({ name, Icon, small }) => (
                  <Row key={name} $indent={small ? 73 : 71} $icon={small ? 26 : 30} $gap={small ? 13 : 11}>
                    <Icon />{name}
                  </Row>
                ))}
                <Row $indent={39} $icon={30} $gap={11}><SmartFolder />最常使用的</Row>
                <Row $indent={39} $icon={30} $gap={11}><SmartFolder />最近添加</Row>
              </LibraryList>
              <ActionList>
                {ACTIONS.map((name) => (
                  <Row key={name} $selected={name === '打开访达项目'} $indent={11} $icon={26} $gap={13}>{actionIcon(name)}{name}</Row>
                ))}
              </ActionList>
              <Track $top={6} $thumb={957} />
            </Browser>
            <Info>
              <InfoText>
                <InfoHead><Finder w={52} h={49} />打开访达项目</InfoHead>
                <InfoDesc>此操作将使用指定的应用程序打开传递来的“访达”项目。</InfoDesc>
                <InfoLine><b>输入：</b>文件/文件夹</InfoLine>
                <InfoLine><b>结果：</b>文件/文件夹</InfoLine>
                <InfoLine $spacing={1}><b>版本：</b>1.1.1</InfoLine>
              </InfoText>
              <Track $top={6} $thumb={183} />
            </Info>
            <Footer $left={17} $gap={25}>
              <svg width="42" height="28" viewBox="0 0 42 28">
                <circle cx="11" cy="13" r="5.700" fill="none" stroke="#fff" strokeWidth="4" />
                <circle cx="11" cy="13" r="8.600" fill="none" stroke="#fff" strokeWidth="3" strokeDasharray="3.377 3.377" strokeDashoffset="1.700" />
                <path d="M28 9.500L34 15L40 9.500" fill="none" stroke="#fff" strokeWidth="3" />
              </svg>
              <svg width="26" height="28" viewBox="0 0 26 28">
                <path d="M1 1H25V27H1Z" fill="none" stroke="#b9babb" strokeWidth="2" /><path d="M0 0H26V4H0Z" fill="#b9babb" />
                <path d="M7 10.500L13 17L19 10.500" fill="none" stroke="#b9babb" strokeWidth="2.600" />
              </svg>
            </Footer>
          </Side>

          <Main>
            <InputHeader>应用程序将文件和文件夹作为输入来接收</InputHeader>
            <Canvas>
              <HeaderNotch width="48" height="20"><path d="M0 0H48L24 20Z" fill="#000" /></HeaderNotch>
              <ActionCard title="获取所选的访达项目" height={98} />
              <ActionCard title="打开访达项目" height={174} last>
                <CardField>
                  打开方式：
                  <Select>
                    <svg width="32" height="32" viewBox="0 0 32 32">
                      <path d="M2 5L27 1.500L31 27L5 31Z" fill="#f3f3f3" />
                      <text x="10.500" y="22" fontFamily="Liberation Serif" fontSize="17" fill="#333" letterSpacing="0">T</text>
                    </svg>
                    Typora.app
                    <Stepper>
                      <svg width="14" height="22" viewBox="0 0 14 22"><path d="M1.500 7.500L7 1.500L12.500 7.500M1.500 14L7 20L12.500 14" fill="none" stroke="#fff" strokeWidth="2.400" strokeLinecap="round" strokeLinejoin="round" /></svg>
                    </Stepper>
                  </Select>
                </CardField>
              </ActionCard>
            </Canvas>
            <LogHead><LogCell $width={1221}>日志</LogCell><LogCell $width={198}>持续时间</LogCell></LogHead>
            <LogBody>{[0, 1, 2, 3, 4, 5, 6].map((i) => <LogRow key={i} />)}</LogBody>
            <Footer $left={19} $gap={37}>
              <svg width="28" height="28" viewBox="0 0 28 28"><rect x="1" y="1" width="26" height="30" fill="none" stroke="#2f7bf6" strokeWidth="2" /><path d="M6 7H22M6 13H22M6 19H22" stroke="#2f7bf6" strokeWidth="2" /></svg>
              <svg width="28" height="28" viewBox="0 0 28 28"><g fill="none" stroke="#b9babb" strokeWidth="2"><rect x="1" y="1" width="26" height="10" rx="3" /><rect x="1" y="15" width="26" height="12" rx="3" /></g></svg>
            </Footer>
          </Main>
        </Body>
      </Window>

      <Marks width="2188" height="1564" viewBox="0 0 2188 1564">
        <g fill="none" stroke={RED} strokeWidth="6" strokeLinecap="round" strokeLinejoin="round">
          <rect x="198" y="132" width="100" height="56" rx="7" />
          <rect x="329.500" y="243" width="237.500" height="61" rx="8" />
          <rect x="344" y="590" width="277" height="55" rx="8" />
          <path d="M320 100L317.500 128L316.500 142" />
          <path d="M274.500 242.500L295 237Q301 235 304 238L312.500 247L314 267Q314 270 309 271L284 273L303 273Q307 275 307.500 288Q290 296 282 295L279.500 293" />
          <path d="M288 582.500L293 579.500L310 578Q313 578 313 582L316 596Q316 602 305 616L292 617L326.500 613.500" />
          <path d="M1304 479L1299 493Q1287 514 1280 526L1283 529L1313 526L1344 525M1317.500 492.500L1317 557" strokeWidth="5.500" />
          <path d="M1159.300 759V783L1156.700 796L1183 792Q1190 793 1187.700 802Q1180 813 1168 813.500L1147.500 812.300M1165 770.700L1172.700 767.300H1186.300" />
        </g>
        <g fill={RED}>
          <path d="M609.300 318.500Q609 311 615 311Q618 312 620 315L759 506.700L771.300 492.700L773.700 552.700L718.700 527.700L736.700 522.700Z" />
          <path d="M640 605Q639 613 645 613.500Q649 613 651 610L778.300 390L790.700 403.300L787.700 343L735 373.300L753 376.700Z" />
        </g>
      </Marks>
      <SaveNote>保存</SaveNote>
    </Desktop>
  </>
);

export default App;
